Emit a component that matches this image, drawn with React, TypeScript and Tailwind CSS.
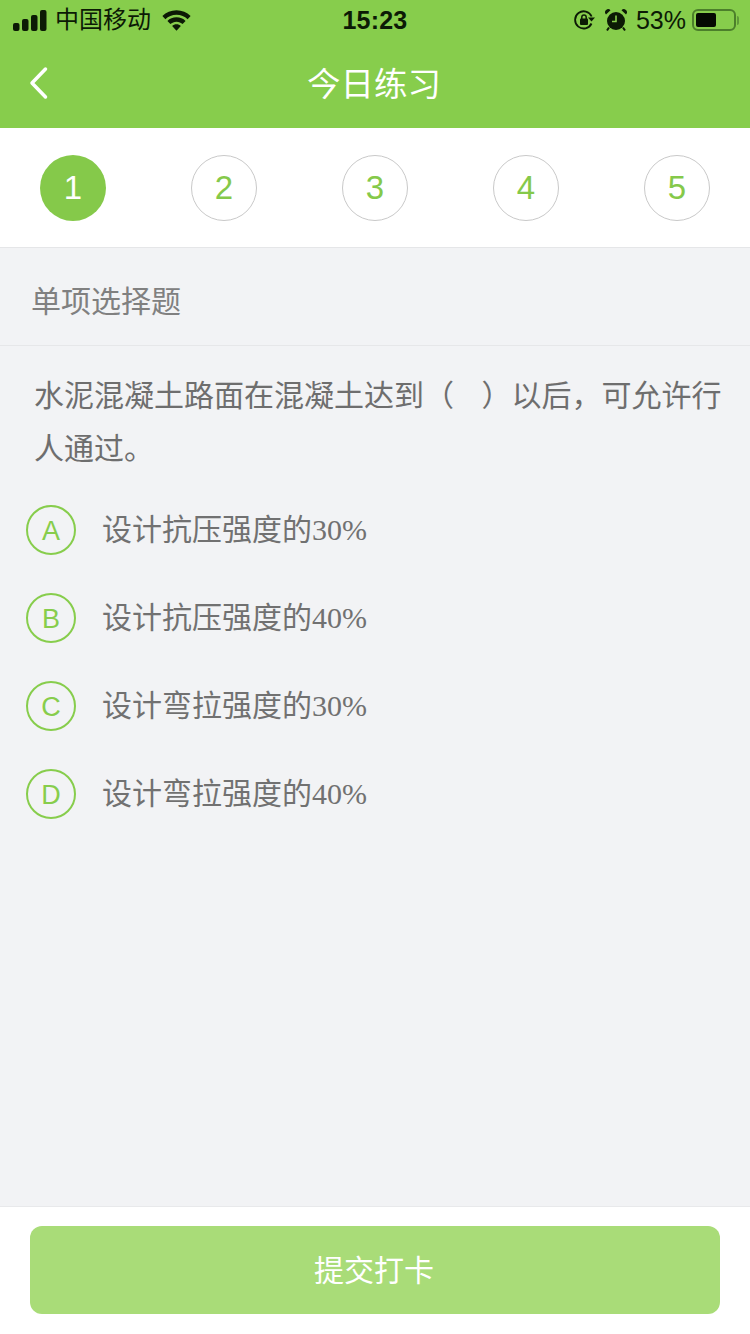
const sans = "font-['Liberation_Sans','Noto_Sans_CJK_SC',sans-serif]"

const steps = ["1", "2", "3", "4", "5"]
const options = [
    { key: "A", text: "设计抗压强度的", value: "30%" },
    { key: "B", text: "设计抗压强度的", value: "40%" },
    { key: "C", text: "设计弯拉强度的", value: "30%" },
    { key: "D", text: "设计弯拉强度的", value: "40%" },
]

function StatusBar() {
    return (
        <div className="flex h-10 items-center justify-between pl-[13px] pr-[11px] text-[#0c1a05]">
            <div className="flex w-[250px] items-center">
                <svg width="34" height="21" viewBox="0 0 34 21" fill="currentColor">
                    <rect x="0" y="13" width="6.500" height="8" rx="2" />
                    <rect x="9" y="9" width="6.500" height="12" rx="2" />
                    <rect x="18" y="5" width="6.500" height="16" rx="2" />
                    <rect x="27" y="0" width="6.500" height="21" rx="2" />
                </svg>
                <span className="ml-[8px] text-[24px] leading-none">中国移动</span>
                <svg className="ml-[11px]" width="29" height="21" viewBox="0 0 30 21" fill="currentColor">
                    <path d="M15 0C9.300 0 4.200 2.200.4 5.900l3.100 3.200C6.500 6.200 10.500 4.500 15 4.500s8.500 1.700 11.500 4.600l3.100-3.200C25.800 2.200 20.700 0 15 0z" />
                    <path d="M15 7.200c-3.700 0-7 1.400-9.400 3.800l3.100 3.200c1.600-1.600 3.800-2.500 6.300-2.500s4.700.9 6.300 2.500l3.100-3.200C22 8.600 18.700 7.200 15 7.200z" />
                    <path d="M15 14.400c-1.800 0-3.300.7-4.500 1.800L15 21l4.500-4.800c-1.200-1.100-2.700-1.800-4.500-1.800z" />
                </svg>
            </div>
            <span className="pr-[2px] text-[25px] font-semibold leading-none tracking-[0.2px]">15:23</span>
            <div className="flex w-[250px] items-center justify-end">
                <svg width="22" height="22" viewBox="0 0 22 22" fill="none" stroke="currentColor" strokeWidth="1.800">
                    <path d="M18.500 14.500A8.600 8.600 0 1 1 18.600 7.500" />
                    <path d="M22 8.500h-7l3.500 4z" fill="currentColor" stroke="none" />
                    <rect x="7" y="9.500" width="8" height="6.500" rx="1" fill="currentColor" stroke="none" />
                    <path d="M8.800 10V8.200a2.200 2.200 0 0 1 4.400 0V10" strokeWidth="1.500" />
                </svg>
                <svg className="ml-[10px]" width="22" height="24" viewBox="0 0 22 24" fill="currentColor">
                    <circle cx="11" cy="13" r="9" />
                    <path d="M1 6.500 5.500 2.200A3 3 0 0 0 1 6.500zM21 6.500l-4.500-4.300A3 3 0 0 1 21 6.500z" />
                    <path d="M4 19.500 2 22.500M18 19.500l2 3" stroke="currentColor" strokeWidth="2" />
                    <path d="M11 7.500V13.500H7" fill="none" stroke="#87cd4c" strokeWidth="1.600" />
                </svg>
                <span className="ml-[9px] text-[25px] leading-none">53%</span>
                <div className="ml-[6px] flex items-center">
                    <div className="h-[22px] w-[44px] rounded-[6px] border-2 border-[#4c7f2b] p-[2px]">
                        <div className="h-full w-[20px] rounded-[2px] bg-[#050a02]" />
                    </div>
                    <div className="ml-[1px] h-[9px] w-[2px] rounded-r-full bg-[#5f9a38]" />
                </div>
            </div>
        </div>
    )
}

export default function App() {
    return (
        <div className={`${sans} flex h-[1334px] w-[750px] flex-col bg-[#f2f3f5]`}>
            <div className="h-32 bg-[#87cd4c]">
                <StatusBar />
                <div className="relative flex h-[88px] items-center justify-center pt-[1px] pr-[2px]">
                    <svg className="absolute left-[29px] top-[26px]" width="20" height="34" viewBox="0 0 20 34" fill="none" stroke="white" strokeWidth="3.500" strokeLinecap="round" strokeLinejoin="round">
                        <path d="M16.500 3 3 17l13.500 14" />
                    </svg>
                    <h1 className="text-[33.5px] font-normal leading-none text-white">今日练习</h1>
                </div>
            </div>

            <div className="flex h-[120px] items-center justify-between border-b border-[#e5e6e8] bg-white px-10 pt-[1px]">
                {steps.map((step, i) => (
                    <div
                        key={step}
                        className={
                            i === 0
                                ? "flex size-[66px] items-center justify-center rounded-full bg-[#85c94a] text-[33px] text-white"
                                : "flex size-[66px] items-center justify-center rounded-full border border-[#c9c9c9] text-[33px] text-[#85c94a]"
                        }
                    >
                        {step}
                    </div>
                ))}
            </div>

            <div className="flex h-[98px] items-center border-b border-[#e6e7e9] pl-[31px] pt-[10px] text-[30px] text-[#808080]">
                单项选择题
            </div>

            <div className="flex-1">
                <p className="mt-[23px] pl-[34px] pr-[20px] text-[30px] leading-[53px] text-[#6e6e6e]">
                    水泥混凝土路面在混凝土达到（&nbsp;&nbsp;&nbsp;&#8202;）以后，可允许行人通过。
                </p>
                <div className="mt-[11px] pl-[26px]">
                    {options.map((o) => (
                        <div key={o.key} className="flex h-[88px] items-center">
                            <div className="flex size-[50px] items-center justify-center rounded-full border-2 border-[#87cd4c] pt-[3px] text-[27px] text-[#87cd4c]">
                                {o.key}
                            </div>
                            <span className="ml-[26px] pb-[2px] text-[30px] text-[#717171]">
                                {o.text}
                                <span className="font-['Liberation_Serif',serif]">{o.value}</span>
                            </span>
                        </div>
                    ))}
                </div>
            </div>

            <div className="h-[128px] border-t border-[#e8e9eb] bg-white px-[30px] pt-[19px]">
                <button className="h-[88px] w-full rounded-[12px] bg-[#a9dc78] pr-[2px] text-[30px] text-white">
                    提交打卡
                </button>
            </div>
        </div>
    )
}
